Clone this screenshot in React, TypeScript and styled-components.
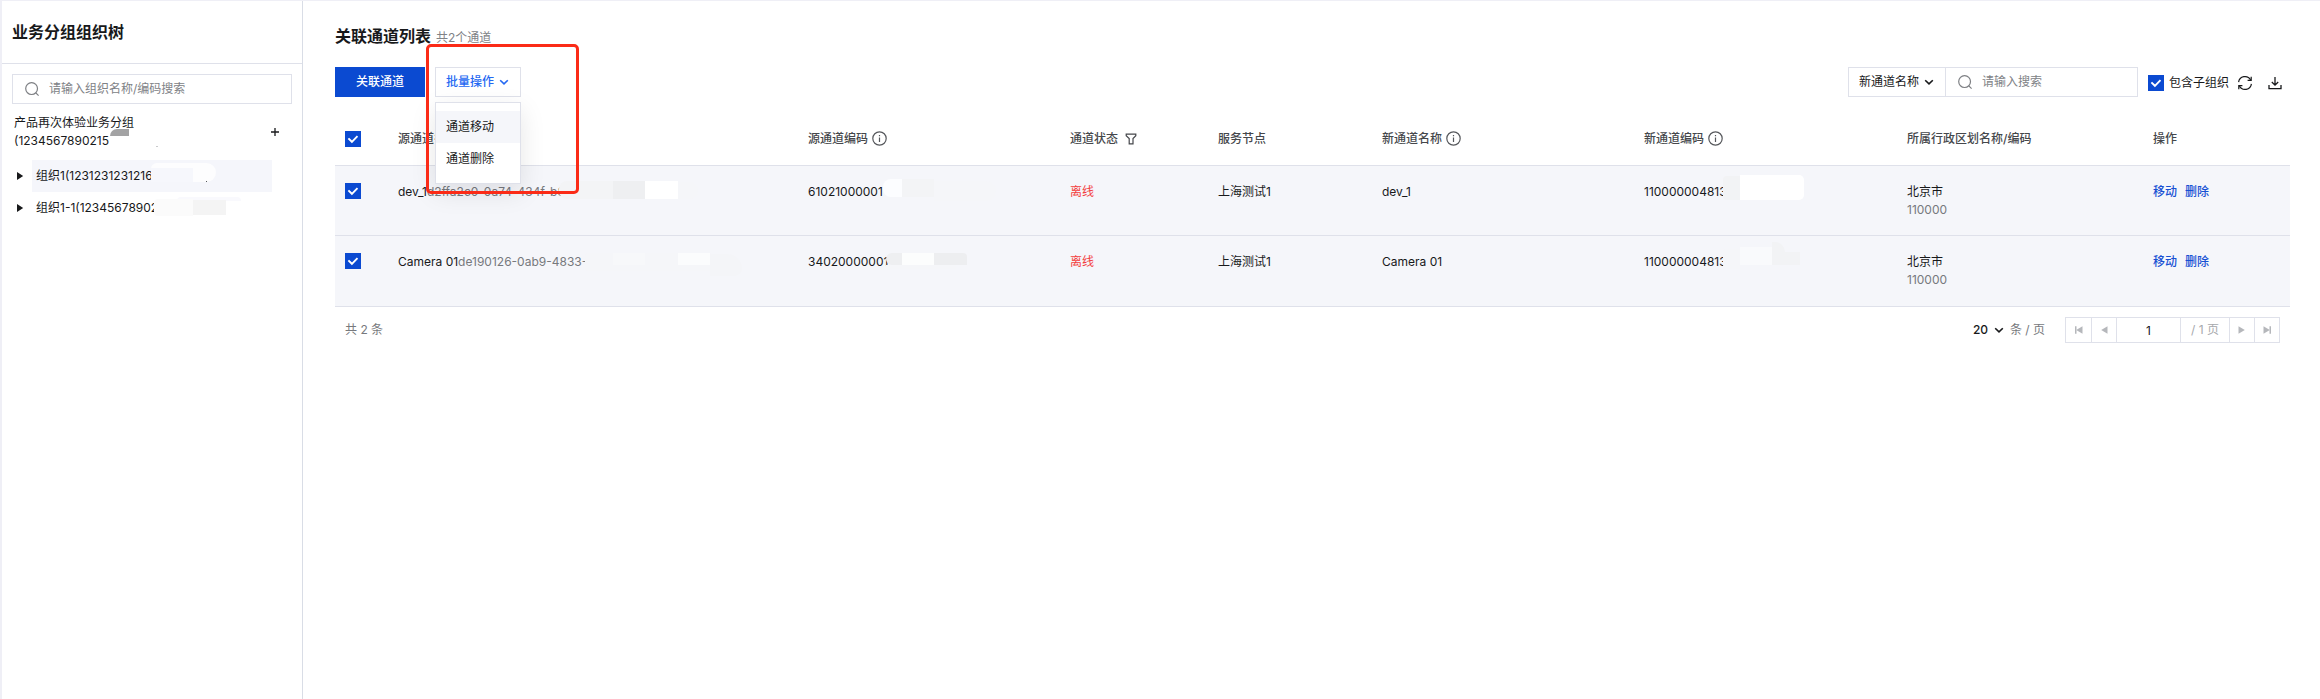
import React, { useState } from 'react';
import styled, { createGlobalStyle, css } from 'styled-components';

const Global = createGlobalStyle`
  * { box-sizing: border-box; }
  body {
    margin: 0;
    background: #fff;
    color: #18191b;
    font: 12px/18px Inter, "Noto Sans CJK SC", sans-serif;
  }
  button, input, select { font: inherit; color: inherit; margin: 0; border-radius: 0; }
  button { cursor: pointer; }
`;

const line = '#dfe1ea';
const blue = '#0b4ad1';

const Page = styled.div`
  display: flex;
  min-height: 100vh;
  border-top: 1px solid #efeff6;
  border-left: 2px solid #efeff6;
`;

const Sidebar = styled.aside`
  flex: 0 0 301px;
  border-right: 1px solid #d9dde6;
`;

const SidebarTitle = styled.h1`
  margin: 0;
  padding: 19px 10px;
  font-size: 16px;
  line-height: 24px;
  font-weight: 600;
  border-bottom: 1px solid ${line};
`;

const SearchBox = styled.label<{ $wide?: boolean }>`
  display: flex;
  align-items: center;
  gap: 9px;
  height: 30px;
  padding: 0 12px;
  border: 1px solid ${line};
  color: #7d7f83;
  ${(p) =>
    p.$wide
      ? css`margin: 10px 10px 0;`
      : css`width: 193px; margin-left: -1px;`}
  input {
    flex: 1;
    min-width: 0;
    padding: 0;
    border: 0;
    outline: 0;
    background: transparent;
  }
  input::placeholder { color: #808286; opacity: 1; }
  svg { flex: none; }
`;

const Tree = styled.div`
  padding: 10px 30px 0 12px;
`;

const TreeRoot = styled.div`
  position: relative;
  display: flex;
  align-items: center;
  justify-content: space-between;
  margin: 0 -11px 10px 0;
`;

const TreeName = styled.span`
  max-width: 160px;
`;

const IconButton = styled.button`
  display: grid;
  place-items: center;
  width: 16px;
  height: 16px;
  padding: 0;
  border: 0;
  background: none;
`;

const TreeNode = styled.div`
  position: relative;
  display: flex;
  align-items: center;
  height: 32px;
`;

const TreeLabel = styled.button<{ $active?: boolean }>`
  flex: 1;
  height: 32px;
  padding: 0 4px;
  border: 0;
  text-align: left;
  background: ${(p) => (p.$active ? '#f5f6fb' : 'transparent')};
`;

const Main = styled.main`
  flex: 1;
  min-width: 0;
  padding: 23px 30px 0 32px;
`;

const Heading = styled.header`
  display: flex;
  align-items: baseline;
  gap: 5px;
  h2 { margin: 0; font-size: 16px; line-height: 24px; font-weight: 600; }
  span { color: #808286; }
`;

const Toolbar = styled.div`
  display: flex;
  align-items: center;
  justify-content: space-between;
  margin: 19px 0 15px;
`;

const Group = styled.div`
  display: flex;
  align-items: center;
`;

const Tools = styled(Group)`
  padding-top: 2px;
`;

const PrimaryButton = styled.button`
  width: 90px;
  height: 30px;
  margin-right: 10px;
  padding: 0;
  border: 0;
  background: ${blue};
  color: #fff;
  font-weight: 500;
`;

const MenuAnchor = styled.div`
  position: relative;
`;

const MenuButton = styled.button`
  display: flex;
  align-items: center;
  gap: 5px;
  width: 86px;
  height: 30px;
  padding: 0 10px;
  border: 1px solid ${line};
  background: #fff;
  color: #2468f2;
  font-weight: 500;
`;

const Menu = styled.div`
  position: absolute;
  z-index: 2;
  top: 35px;
  left: 0;
  width: 86px;
  padding: 8px 0;
  border: 1px solid ${line};
  background: #fff;
  box-shadow: 0 8px 24px rgba(7, 12, 20, 0.1);
`;

const MenuItem = styled.button`
  display: block;
  width: 100%;
  height: 32px;
  padding: 0 10px;
  border: 0;
  text-align: left;
  background: #fff;
  &:first-child { background: #f5f6fa; }
`;

const Highlight = styled.div`
  position: absolute;
  z-index: 3;
  top: -23px;
  left: -9px;
  width: 153px;
  height: 150px;
  border: 3px solid #fb2b17;
  border-radius: 5px;
  pointer-events: none;
`;

const Picker = styled.span<{ $framed?: boolean }>`
  display: grid;
  align-items: center;
  justify-items: end;
  select {
    grid-area: 1 / 1;
    appearance: none;
    outline: 0;
    background: transparent;
    border: 0;
    padding: 0;
    width: 31px;
    font-weight: 500;
  }
  svg { grid-area: 1 / 1; pointer-events: none; }
  ${(p) =>
    p.$framed &&
    css`
      select {
        width: 98px;
        height: 30px;
        padding: 0 10px;
        border: 1px solid ${line};
        font-weight: 400;
      }
      svg { margin-right: 12px; }
    `}
`;

const CheckLabel = styled.label`
  display: flex;
  align-items: center;
  gap: 5px;
  margin: 0 8px 0 10px;
`;

const CheckBox = styled.span`
  display: grid;
  place-items: center;
  width: 16px;
  height: 16px;
  input {
    grid-area: 1 / 1;
    appearance: none;
    width: 16px;
    height: 16px;
    border: 1px solid ${line};
    background: #fff;
  }
  input:checked { background: ${blue}; border-color: ${blue}; }
  svg { grid-area: 1 / 1; pointer-events: none; }
`;

const ToolIcons = styled.div`
  display: flex;
  gap: 14px;
  margin-right: 7px;
`;

const Table = styled.table`
  width: 100%;
  table-layout: fixed;
  border-collapse: separate;
  border-spacing: 0;
  th, td {
    padding: 0 10px;
    text-align: left;
    border-bottom: 1px solid ${line};
  }
  th { height: 54px; font-weight: 500; color: #45474b; }
  td { height: 70px; padding-top: 17px; vertical-align: top; background: #f5f6fa; }
  tr:last-child td { height: 71px; }
`;

const HeadCell = styled.span`
  display: flex;
  align-items: center;
  gap: 4px;
`;

const Cell = styled.div`
  position: relative;
  white-space: nowrap;
`;

const Muted = styled.span`
  color: #77797d;
`;

const Offline = styled.span`
  color: #f33e3e;
`;

const Actions = styled.div`
  display: flex;
  gap: 8px;
  a { color: #1750d3; text-decoration: none; font-weight: 500; }
`;

type Patch = { x: number; y: number; w: number; h: number; c: string; r?: string };

/* Redaction strokes painted over the sensitive part of a value. */
const Smudge = styled.i<{ $p: Patch }>`
  position: absolute;
  left: ${(p) => p.$p.x}px;
  top: ${(p) => p.$p.y}px;
  width: ${(p) => p.$p.w}px;
  height: ${(p) => p.$p.h}px;
  background: ${(p) => p.$p.c};
  border-radius: ${(p) => p.$p.r ?? '0'};
  pointer-events: none;
`;

const Footer = styled.footer`
  display: flex;
  align-items: center;
  justify-content: space-between;
  padding: 10px 10px;
  color: #77797d;
`;

const PageSize = styled.label`
  display: flex;
  align-items: center;
  gap: 6px;
  margin-right: 20px;
  select { color: #18191b; }
  svg { color: #18191b; }
`;

const Pager = styled.nav`
  display: flex;
  border: 1px solid ${line};
  && > * + * { border-left: 1px solid ${line}; }
`;

const PagerButton = styled.button`
  display: grid;
  place-items: center;
  width: 25px;
  height: 24px;
  padding: 0;
  border: 0;
  background: #fff;
  color: #b5b7bb;
`;

const PagerInput = styled.input`
  width: 64px;
  height: 24px;
  padding: 0;
  border: 0;
  outline: 0;
  text-align: center;
  color: #18191b;
`;

const PagerTotal = styled.span`
  width: 49px;
  line-height: 24px;
  text-align: center;
  color: #a6a8ac;
`;

const SearchIcon = () => (
  <svg width="15" height="15" viewBox="0 0 15 15" fill="none" stroke="currentColor" strokeWidth="1.2">
    <circle cx="6.6" cy="6.6" r="5.9" />
    <path d="M10.800 10.800l2.800 2.800" />
  </svg>
);

const Chevron = () => (
  <svg width="10" height="10" viewBox="0 0 10 10" fill="none" stroke="currentColor" strokeWidth="1.6">
    <path d="M1.2 3.2L5 6.9l3.8-3.7" />
  </svg>
);

const InfoIcon = () => (
  <svg width="15" height="15" viewBox="0 0 15 15" fill="none" stroke="#55575b" strokeWidth="1.2">
    <circle cx="7.5" cy="7.5" r="6.7" />
    <path d="M7.5 6.4V11M7.5 4v1.3" />
  </svg>
);

const FilterIcon = () => (
  <svg width="12" height="12" viewBox="0 0 12 12" fill="none" stroke="#45474b" strokeWidth="1.2">
    <path d="M1.2 1.2h9.6v1.5L8 5.6v5.2H4.2V5.6L1.2 2.7z" />
  </svg>
);

const Caret = () => (
  <svg width="18" height="10" viewBox="0 0 18 10" fill="#18191b">
    <path d="M3 1l6.2 4L3 9z" />
  </svg>
);

const PageIcon = ({ flip, end }: { flip?: boolean; end?: boolean }) => (
  <svg width="10" height="10" viewBox="0 0 10 10" fill="currentColor">
    <g transform={flip ? 'translate(10 0) scale(-1 1)' : undefined}>
      <path d="M8.500 1.200v7.600L2.200 5z" />
      {end && <path d="M1 1.200h1.500v7.600H1z" />}
    </g>
  </svg>
);

function Tick({ label }: { label: string }) {
  const [on, setOn] = useState(true);
  return (
    <CheckBox>
      <input type="checkbox" aria-label={label} checked={on} onChange={() => setOn(!on)} />
      {on && (
        <svg width="16" height="16" viewBox="0 0 16 16" fill="none" stroke="#fff" strokeWidth="1.9">
          <path d="M3.4 7.4l3.5 3.4 5.6-5.6" />
        </svg>
      )}
    </CheckBox>
  );
}

const Smudges = ({ items }: { items: Patch[] }) => (
  <>
    {items.map((p, i) => (
      <Smudge key={i} $p={p} />
    ))}
  </>
);

const columns = [53, 410, 262, 148, 164, 262, 263, 246, 147];

const rows = [
  {
    name: 'dev_1',
    id: 'd2ffa2c0-0a74-434f-b8',
    code: '61021000001',
    newCode: '110000004813',
    nameMask: [
      { x: 161, y: -2, w: 54, h: 18, c: '#f3f4f6', r: '8px 0 0 8px' },
      { x: 215, y: -2, w: 32, h: 18, c: '#eeeff1' },
      { x: 247, y: -2, w: 33, h: 18, c: '#fff' },
      { x: 280, y: -1, w: 20, h: 17, c: '#f5f6f9', r: '0 8px 8px 0' },
    ],
    codeMask: [
      { x: 75, y: -4, w: 19, h: 18, c: '#fcfdff', r: '8px 0 0 8px' },
      { x: 94, y: -4, w: 32, h: 18, c: '#f3f4f6' },
      { x: 126, y: -2, w: 62, h: 20, c: '#f5f6f9', r: '0 10px 10px 0' },
    ],
    newCodeMask: [
      { x: 79, y: -7, w: 17, h: 24, c: '#f2f3f5', r: '4px 0 0 4px' },
      { x: 96, y: -8, w: 64, h: 25, c: '#fff', r: '0 5px 5px 0' },
    ],
  },
  {
    name: 'Camera 01',
    id: 'de190126-0ab9-4833-',
    code: '34020000001',
    newCode: '110000004813',
    nameMask: [
      { x: 187, y: 0, w: 127, h: 18, c: '#f5f6f9', r: '4px' },
      { x: 215, y: 0, w: 32, h: 12, c: '#f7f8fa' },
      { x: 280, y: 0, w: 32, h: 12, c: '#fbfcfd' },
      { x: 312, y: 1, w: 32, h: 22, c: '#f4f5f8', r: '0 16px 8px 0' },
    ],
    codeMask: [
      { x: 78, y: 0, w: 16, h: 12, c: '#eeeff1', r: '6px 0 0 6px' },
      { x: 78, y: 12, w: 70, h: 4, c: '#f5f6f9' },
      { x: 94, y: 0, w: 32, h: 12, c: '#fcfdfd' },
      { x: 126, y: 0, w: 33, h: 12, c: '#edeef0', r: '0 4px 0 0' },
    ],
    newCodeMask: [
      { x: 79, y: -4, w: 17, h: 20, c: '#f5f6f9', r: '4px 0 0 4px' },
      { x: 96, y: -6, w: 32, h: 18, c: '#f9fafc' },
      { x: 128, y: -11, w: 13, h: 23, c: '#f2f3f5', r: '0 10px 0 0' },
      { x: 141, y: -1, w: 15, h: 13, c: '#f2f3f5' },
    ],
  },
];

export default function App() {
  return (
    <>
      <Global />
      <Page>
        <Sidebar>
          <SidebarTitle>业务分组组织树</SidebarTitle>
          <SearchBox $wide>
            <SearchIcon />
            <input aria-label="搜索组织" placeholder="请输入组织名称/编码搜索" />
          </SearchBox>
          <Tree>
            <TreeRoot>
              <TreeName>产品再次体验业务分组 (1234567890215</TreeName>
              <IconButton aria-label="新增组织">
                <svg width="10" height="10" viewBox="0 0 10 10" stroke="#18191b" strokeWidth="1.3">
                  <path d="M5 1v8M1 5h8" />
                </svg>
              </IconButton>
              <Smudges
                items={[
                  { x: 96, y: 15, w: 19, h: 7, c: '#a3a3a4', r: '8px 0 0 0' },
                  { x: 142, y: 32, w: 2, h: 1, c: '#c9cacc' },
                ]}
              />
            </TreeRoot>
            <TreeNode>
              <Caret />
              <TreeLabel $active>组织1(1231231231216</TreeLabel>
              <Smudges
                items={[
                  { x: 137, y: 3, w: 65, h: 19, c: '#fdfdfe', r: '6px 10px 10px 6px' },
                  { x: 137, y: 8, w: 42, h: 14, c: '#f6f7fc' },
                  { x: 192, y: 21, w: 1, h: 1, c: '#55575b' },
                ]}
              />
            </TreeNode>
            <TreeNode>
              <Caret />
              <TreeLabel>组织1-1(123456789023</TreeLabel>
              <Smudges
                items={[
                  { x: 163, y: 5, w: 64, h: 4, c: '#f9f9fd', r: '4px 4px 0 0' },
                  { x: 140, y: 7, w: 39, h: 17, c: '#fbfbfb', r: '4px 0 0 4px' },
                  { x: 179, y: 8, w: 33, h: 15, c: '#f4f4f4' },
                ]}
              />
            </TreeNode>
          </Tree>
        </Sidebar>
        <Main>
          <Heading>
            <h2>关联通道列表</h2>
            <span>共2个通道</span>
          </Heading>
          <Toolbar>
            <Group>
              <PrimaryButton>关联通道</PrimaryButton>
              <MenuAnchor>
                <MenuButton aria-haspopup="menu" aria-expanded="true">
                  批量操作
                  <Chevron />
                </MenuButton>
                <Menu role="menu">
                  <MenuItem role="menuitem">通道移动</MenuItem>
                  <MenuItem role="menuitem">通道删除</MenuItem>
                </Menu>
                <Highlight />
              </MenuAnchor>
            </Group>
            <Group>
              <Picker $framed>
                <select aria-label="搜索字段">
                  <option>新通道名称</option>
                </select>
                <Chevron />
              </Picker>
              <SearchBox>
                <SearchIcon />
                <input aria-label="搜索通道" placeholder="请输入搜索" />
              </SearchBox>
              <Tools>
                <CheckLabel>
                  <Tick label="包含子组织" />
                  包含子组织
                </CheckLabel>
                <ToolIcons>
                  <IconButton aria-label="刷新">
                    <svg width="16" height="16" viewBox="0 0 16 16" fill="none" stroke="#18191b" strokeWidth="1.2">
                      <path d="M1.6 7.2A6.4 6.4 0 0 1 13.6 5M14.4 8.8A6.4 6.4 0 0 1 2.4 11" />
                      <path d="M14.2 1.8v3.6h-3.6M1.8 14.2v-3.6h3.6" />
                    </svg>
                  </IconButton>
                  <IconButton aria-label="下载">
                    <svg width="14" height="14" viewBox="0 0 14 14" fill="none" stroke="#18191b" strokeWidth="1.3">
                      <path d="M7 1v8M3.8 6L7 9.2 10.200 6M1 9v3.600h12V9" />
                    </svg>
                  </IconButton>
                </ToolIcons>
              </Tools>
            </Group>
          </Toolbar>
          <Table>
            <colgroup>
              {columns.map((w, i) => (
                <col key={i} width={w} />
              ))}
            </colgroup>
            <thead>
              <tr>
                <th><Tick label="全选" /></th>
                <th>源通道名称</th>
                <th><HeadCell>源通道编码<InfoIcon /></HeadCell></th>
                <th><HeadCell>通道状态&nbsp;<FilterIcon /></HeadCell></th>
                <th>服务节点</th>
                <th><HeadCell>新通道名称<InfoIcon /></HeadCell></th>
                <th><HeadCell>新通道编码<InfoIcon /></HeadCell></th>
                <th>所属行政区划名称/编码</th>
                <th>操作</th>
              </tr>
            </thead>
            <tbody>
              {rows.map((r) => (
                <tr key={r.name}>
                  <td><Tick label={r.name} /></td>
                  <td>
                    <Cell>
                      {r.name}
                      <Muted>{r.id}</Muted>
                      <Smudges items={r.nameMask} />
                    </Cell>
                  </td>
                  <td><Cell>{r.code}<Smudges items={r.codeMask} /></Cell></td>
                  <td><Offline>离线</Offline></td>
                  <td>上海测试1</td>
                  <td>{r.name}</td>
                  <td><Cell>{r.newCode}<Smudges items={r.newCodeMask} /></Cell></td>
                  <td>
                    北京市
                    <br />
                    <Muted>110000</Muted>
                  </td>
                  <td>
                    <Actions>
                      <a href="#move">移动</a>
                      <a href="#delete">删除</a>
                    </Actions>
                  </td>
                </tr>
              ))}
            </tbody>
          </Table>
          <Footer>
            <span>共 2 条</span>
            <Group>
              <PageSize>
                <Picker>
                  <select aria-label="每页条数">
                    <option>20</option>
                  </select>
                  <Chevron />
                </Picker>
                条 / 页
              </PageSize>
              <Pager aria-label="分页">
                <PagerButton aria-label="首页"><PageIcon end /></PagerButton>
                <PagerButton aria-label="上一页"><PageIcon /></PagerButton>
                <PagerInput aria-label="页码" defaultValue="1" />
                <PagerTotal>/ 1 页</PagerTotal>
                <PagerButton aria-label="下一页"><PageIcon flip /></PagerButton>
                <PagerButton aria-label="末页"><PageIcon flip end /></PagerButton>
              </Pager>
            </Group>
          </Footer>
        </Main>
      </Page>
    </>
  );
}
